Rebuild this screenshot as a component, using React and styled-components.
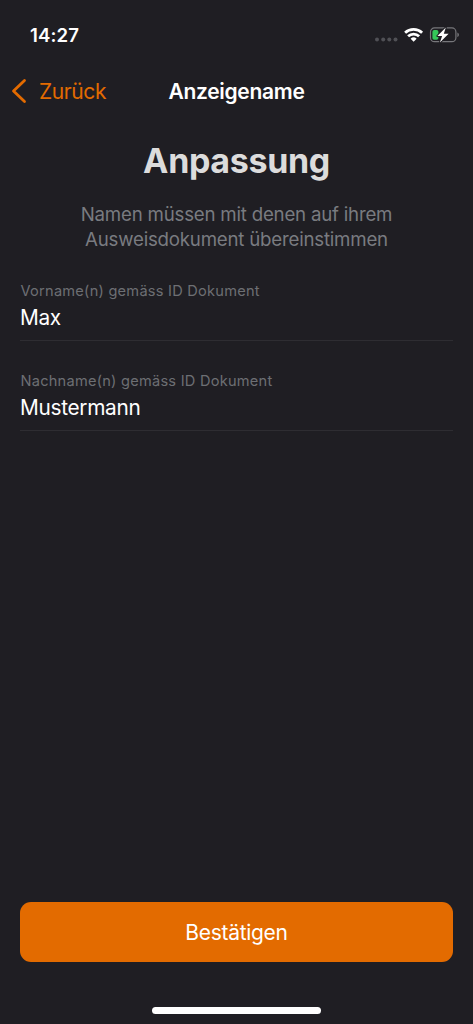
import { useState } from "react"
import styled, { createGlobalStyle } from "styled-components"

const GlobalStyle = createGlobalStyle`
  * {
    box-sizing: border-box;
    margin: 0;
    padding: 0;
  }

  body {
    background-color: #1f1e23;
    font-family: Inter, "Liberation Sans", sans-serif;
    -webkit-font-smoothing: antialiased;
  }
`

const Screen = styled.div`
  display: flex;
  flex-direction: column;
  height: 1024px;
  background-color: #1f1e23;
  color: #fff;
`

const StatusBar = styled.header`
  display: flex;
  align-items: center;
  justify-content: space-between;
  height: 69px;
  padding: 0 14px 0 30px;
`

const Time = styled.span`
  font-size: 18.6px;
  font-weight: 600;
  letter-spacing: 0.1px;
`

const StatusIcons = styled.svg`
  display: block;
`

const NavBar = styled.nav`
  display: grid;
  grid-template-columns: 1fr auto 1fr;
  align-items: center;
  height: 44px;
  padding: 0 11px;
`

const BackButton = styled.button`
  display: flex;
  align-items: center;
  gap: 12px;
  border: none;
  background-color: transparent;
  color: #e36b00;
  font-family: inherit;
  font-size: 21px;
  letter-spacing: -0.4px;
`

const NavTitle = styled.h2`
  font-size: 21px;
  font-weight: 600;
  letter-spacing: -0.3px;
`

const Content = styled.main`
  flex: 1;
  padding: 26px 20px 0;
`

const Heading = styled.h1`
  font-size: 34px;
  font-weight: 700;
  line-height: 43px;
  letter-spacing: -0.35px;
  text-align: center;
  color: #dcdcdc;
`

const Text = styled.p`
  width: 340px;
  margin: 20px auto 0;
  font-size: 18.7px;
  line-height: 25px;
  letter-spacing: -0.22px;
  text-align: center;
  color: #797b80;
`

const Fields = styled.form`
  display: flex;
  flex-direction: column;
  gap: 30px;
  margin-top: 29px;
`

const Field = styled.label`
  display: flex;
  flex-direction: column;
  height: 60px;
  border-bottom: 1px solid #2e2d32;
`

const FieldLabel = styled.span`
  padding-left: 0.5px;
  font-size: 14.6px;
  line-height: 20px;
  letter-spacing: 0.24px;
  color: #6d6f73;
`

const FieldInput = styled.input`
  width: 100%;
  height: 32px;
  border: none;
  outline: none;
  background-color: transparent;
  color: #fff;
  font-family: inherit;
  font-size: 20.8px;
  letter-spacing: -0.3px;
`

const Footer = styled.footer`
  display: flex;
  flex-direction: column;
  align-items: center;
  gap: 45px;
  padding: 0 20px 10px;
`

const ConfirmButton = styled.button`
  width: 100%;
  height: 60px;
  padding-top: 1px;
  border: none;
  border-radius: 11px;
  background-color: #e36b00;
  color: #fff;
  font-family: inherit;
  font-size: 21px;
  letter-spacing: -0.3px;
`

const HomeIndicator = styled.div`
  width: 169px;
  height: 7px;
  border-radius: 4px;
  background-color: #fff;
`

function Status() {
  return (
    <StatusIcons width="86" height="20" viewBox="0 0 86 20">
      <g fill="#505055">
        <circle cx="4" cy="14.5" r="2" />
        <circle cx="10.2" cy="14.5" r="2" />
        <circle cx="16.3" cy="14.5" r="2" />
        <circle cx="22.5" cy="14.5" r="2" />
      </g>
      <g fill="none" stroke="#fff" strokeWidth="2.8">
        <path d="M32.1 7.8a12.4 12.4 0 0 1 17 0" />
        <path d="M35.1 11.3a8 8 0 0 1 11 0" />
      </g>
      <path d="M37.6 13.7a4.4 4.4 0 0 1 6 0L40.6 16.8z" fill="#fff" />
      <rect
        x="57.5"
        y="2.9"
        width="25.4"
        height="13.8"
        rx="4"
        fill="none"
        stroke="#77777b"
        strokeWidth="1.2"
      />
      <path d="M84.4 7.5c2 .8 2 3.8 0 4.6z" fill="#77777b" />
      <rect x="59.4" y="4.9" width="6" height="9.8" rx="1.8" fill="#34c759" />
      <path
        d="M72.8 2.4l-8.4 8.6h4.7l-2.2 6.6 8.7-8.9h-4.8z"
        fill="#fff"
        stroke="#1f1e23"
        strokeWidth="2"
        strokeLinejoin="round"
        paintOrder="stroke"
      />
    </StatusIcons>
  )
}

export default function App() {
  const [firstName, setFirstName] = useState("Max")
  const [lastName, setLastName] = useState("Mustermann")

  return (
    <>
      <GlobalStyle />
      <Screen>
        <StatusBar>
          <Time>14:27</Time>
          <Status />
        </StatusBar>
        <NavBar>
          <BackButton>
            <svg width="16" height="26" viewBox="0 0 16 26">
              <path
                d="M13.5 2.5L2.5 13l11 10.5"
                fill="none"
                stroke="#e36b00"
                strokeWidth="2.8"
                strokeLinecap="round"
                strokeLinejoin="round"
              />
            </svg>
            Zurück
          </BackButton>
          <NavTitle>Anzeigename</NavTitle>
        </NavBar>
        <Content>
          <Heading>Anpassung</Heading>
          <Text>
            Namen müssen mit denen auf ihrem Ausweisdokument übereinstimmen
          </Text>
          <Fields>
            <Field>
              <FieldLabel>Vorname(n) gemäss ID Dokument</FieldLabel>
              <FieldInput
                value={firstName}
                onChange={(e) => setFirstName(e.target.value)}
              />
            </Field>
            <Field>
              <FieldLabel>Nachname(n) gemäss ID Dokument</FieldLabel>
              <FieldInput
                value={lastName}
                onChange={(e) => setLastName(e.target.value)}
              />
            </Field>
          </Fields>
        </Content>
        <Footer>
          <ConfirmButton>Bestätigen</ConfirmButton>
          <HomeIndicator />
        </Footer>
      </Screen>
    </>
  )
}
